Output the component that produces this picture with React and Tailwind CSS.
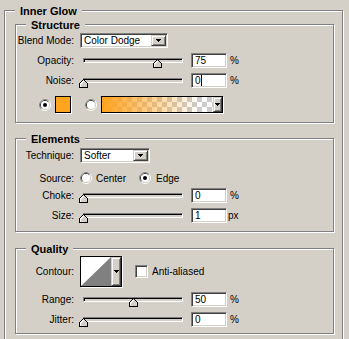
import React from 'react'

// Photoshop "Inner Glow" layer-style panel, classic Windows look.
const sunken =
  'border border-t-[#808080] border-l-[#808080] border-r-white border-b-white shadow-[inset_1px_1px_0_#404040,inset_-1px_-1px_0_#d4d0c8]'
const raised =
  'bg-[#d4d0c8] border border-t-[#d4d0c8] border-l-[#d4d0c8] border-r-[#404040] border-b-[#404040] shadow-[inset_1px_1px_0_#fff,inset_-1px_-1px_0_#808080]'

function Arrow() {
  return (
    <svg width="5" height="3" viewBox="0 0 5 3" shapeRendering="crispEdges">
      <rect x="0" y="0" width="5" height="1" fill="#000" />
      <rect x="1" y="1" width="3" height="1" fill="#000" />
      <rect x="2" y="2" width="1" height="1" fill="#000" />
    </svg>
  )
}

function Group({ title, className, children }) {
  return (
    <div className={`relative border border-[#808080] shadow-[inset_1px_1px_0_#fff,1px_1px_0_#fff] ${className}`}>
      <span className="absolute left-[10px] -top-[6px] bg-[#d4d0c8] px-[5px] text-[11px] font-bold leading-[13px]">
        {title}
      </span>
      {children}
    </div>
  )
}

function Label({ children }) {
  return <span className="w-[58px] shrink-0 text-right leading-[15px]">{children}</span>
}

function Select({ value, width }) {
  return (
    <div className={`flex h-[15px] ${width} bg-white p-[1px] ${sunken}`}>
      <span className="flex-1 pl-[2px] leading-[11px]">{value}</span>
      <span className={`flex w-[15px] items-center justify-center ${raised}`}>
        <Arrow />
      </span>
    </div>
  )
}

function Radio({ checked }) {
  return (
    <svg width="12" height="12" viewBox="0 0 12 12" className="shrink-0">
      <circle cx="6" cy="6" r="5.5" fill="none" stroke="#fff" />
      <path d="M2.1 9.9 A5.5 5.5 0 0 1 9.9 2.1" fill="none" stroke="#808080" />
      <circle cx="6" cy="6" r="4.5" fill="none" stroke="#d4d0c8" />
      <path d="M2.8 9.2 A4.5 4.5 0 0 1 9.2 2.8" fill="none" stroke="#404040" />
      <circle cx="6" cy="6" r="4" fill="#fff" />
      {checked && <circle cx="6" cy="6" r="2" fill="#000" />}
    </svg>
  )
}

function Thumb() {
  return (
    <svg width="9" height="9" viewBox="0 0 9 9" shapeRendering="crispEdges">
      <polygon points="4.5,0.5 8.5,4.5 8.5,8.5 0.5,8.5 0.5,4.5" fill="#d4d0c8" stroke="#000" />
      <polyline points="1.5,8 1.5,4.9 4.5,1.9" fill="none" stroke="#fff" />
    </svg>
  )
}

function Slider({ pct }) {
  return (
    <div className="relative h-[15px] w-[106px] pt-[5px] pl-[3px]">
      <div className="h-[5px] w-[100px] border border-t-[#808080] border-l-[#808080] border-r-white border-b-white bg-[#d4d0c8] shadow-[inset_1px_1px_0_#000]" />
      <div className="absolute top-[6px]" style={{ left: Math.round(pct * 0.99) - 1 }}>
        <Thumb />
      </div>
    </div>
  )
}

function Field({ value, caret }) {
  return (
    <div className={`flex h-[15px] w-[36px] items-center bg-white pl-[3px] ${sunken}`}>
      <span className="leading-[11px]">{value}</span>
      {caret && <span className="h-[11px] w-px bg-black" />}
    </div>
  )
}

function SliderRow({ label, pct, value, unit, caret, className }) {
  return (
    <div className={`flex h-[15px] items-center ${className}`}>
      <Label>{label}</Label>
      <div className="ml-[6px]">
        <Slider pct={pct} />
      </div>
      <div className="ml-[5px]">
        <Field value={value} caret={caret} />
      </div>
      <span className={unit === 'px' ? 'ml-[1px]' : 'ml-[3px]'}>{unit}</span>
    </div>
  )
}

export default function App() {
  return (
    <div className="h-[339px] w-[349px] overflow-hidden bg-[#d4d0c8] pt-[10px] pl-[4px] font-['Liberation_Sans',Arial,sans-serif] text-[10px] text-black">
      <Group title="Inner Glow" className="h-[345px] w-[339px] pt-[13px] pl-[10px]">
        {/* Structure */}
        <Group title="Structure" className="h-[99px] w-[319px]">
          <div className="mt-[8px] flex h-[15px] items-center">
            <Label>Blend Mode:</Label>
            <div className="ml-[6px]">
              <Select value="Color Dodge" width="w-[88px]" />
            </div>
          </div>
          <SliderRow label="Opacity:" pct={75} value="75" unit="%" className="mt-[5px]" />
          <SliderRow label="Noise:" pct={0} value="0" unit="%" caret className="mt-[5px]" />
          <div className="mt-[8px] flex h-[17px] items-center pl-[23px]">
            <Radio checked />
            <div className="ml-[4px] h-[17px] w-[16px] border border-black bg-[#ffa41f] shadow-[1px_1px_0_#fff]" />
            <div className="ml-[14px]">
              <Radio />
            </div>
            <div className="ml-[4px] flex h-[17px] w-[122px] border border-black shadow-[1px_1px_0_#fff]">
              <div className="flex-1 [background-image:linear-gradient(to_right,#ffa31f,rgba(255,163,31,0)_88%),conic-gradient(#cccccc_25%,#ffffff_0_50%,#cccccc_0_75%,#ffffff_0)] [background-size:100%_100%,10px_10px]" />
              <div className={`flex w-[9px] items-center justify-center ${raised}`}>
                <Arrow />
              </div>
            </div>
          </div>
        </Group>

        {/* Elements */}
        <Group title="Elements" className="mt-[15px] h-[94px] w-[319px]">
          <div className="mt-[9px] flex h-[15px] items-center">
            <Label>Technique:</Label>
            <div className="ml-[6px]">
              <Select value="Softer" width="w-[70px]" />
            </div>
          </div>
          <div className="mt-[8px] flex h-[14px] items-center">
            <Label>Source:</Label>
            <div className="ml-[6px] flex items-center">
              <Radio />
              <span className="ml-[4px]">Center</span>
              <div className="ml-[13px]">
                <Radio checked />
              </div>
              <span className="ml-[5px]">Edge</span>
            </div>
          </div>
          <SliderRow label="Choke:" pct={0} value="0" unit="%" className="mt-[3px]" />
          <SliderRow label="Size:" pct={0} value="1" unit="px" className="mt-[5px]" />
        </Group>

        {/* Quality */}
        <Group title="Quality" className="mt-[16px] h-[86px] w-[319px]">
          <div className="mt-[7px] flex h-[31px] items-center">
            <Label>Contour:</Label>
            <div className="ml-[6px] flex h-[31px] w-[42px] border border-black bg-white shadow-[1px_1px_0_#fff]">
              <svg width="30" height="29" viewBox="0 0 30 29" className="shrink-0">
                <rect width="30" height="29" fill="#fff" />
                <polygon points="0,29 30,0 30,29" fill="#808080" />
              </svg>
              <div className={`flex flex-1 items-center justify-center ${raised}`}>
                <Arrow />
              </div>
            </div>
            <div className={`ml-[13px] h-[13px] w-[13px] bg-white ${sunken}`} />
            <span className="ml-[4px]">Anti-aliased</span>
          </div>
          <SliderRow label="Range:" pct={50} value="50" unit="%" className="mt-[5px]" />
          <SliderRow label="Jitter:" pct={0} value="0" unit="%" className="mt-[5px]" />
        </Group>
      </Group>
    </div>
  )
}
